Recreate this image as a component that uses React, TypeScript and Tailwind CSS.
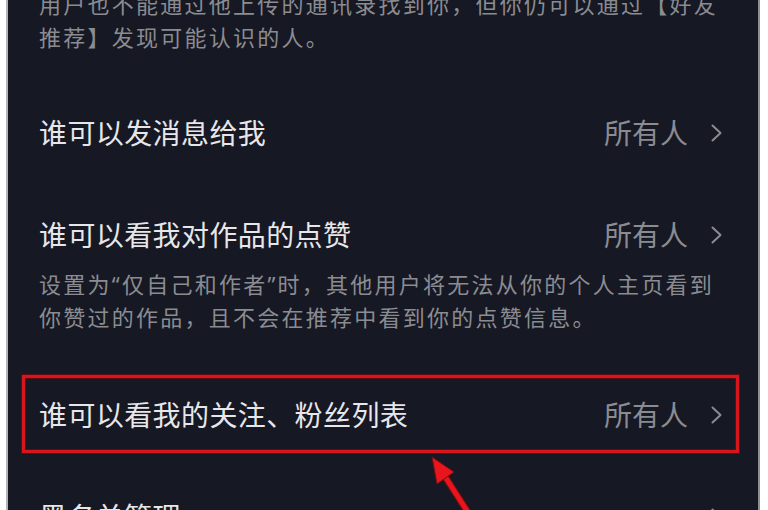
import React from "react";

const font = { fontFamily: '"Noto Sans", "Noto Sans CJK SC", sans-serif' };

function Chevron() {
  return (
    <svg width="14" height="20" viewBox="0 0 14 20" className="ml-[22px] shrink-0">
      <path d="M2.5 2.5 L10.5 10 L2.5 17.5" fill="none" stroke="#8b8c92" strokeWidth="2" strokeLinecap="round" strokeLinejoin="round" />
    </svg>
  );
}

interface RowProps {
  title: string;
  value?: string;
  className?: string;
  highlight?: boolean;
}

function Row({ title, value, className = "", highlight }: RowProps) {
  return (
    <div className={`relative flex h-[40px] shrink-0 items-center justify-between ${className}`}>
      <span className="whitespace-nowrap text-[28px] leading-none tracking-[0.4px] text-[#e7e7ea]">{title}</span>
      <div className="flex items-center">
        {value && <span className="text-[28px] leading-none text-[#8b8c92]">{value}</span>}
        <Chevron />
      </div>
      {/* annotation box */}
      {highlight && (
        <div className="pointer-events-none absolute -bottom-[18px] -left-[17px] -right-[15px] -top-[20px] border-[3px] border-[#d8151d] shadow-[0_0_0_1px_#5a0d12,inset_0_0_0_1px_#5a0d12]" />
      )}
    </div>
  );
}

export default function App() {
  return (
    <div className="relative h-[510px] w-[768px] overflow-hidden bg-white pl-[6px] pr-[8px]" style={font}>
      <div className="flex h-full flex-col overflow-hidden border-l-2 border-r-2 border-l-[#b4b4b4] border-r-[#8e8e8e] bg-[#161823] pl-[31px] pr-[34px]">
        <div className="-mt-[12px] shrink-0 whitespace-nowrap text-[22px] leading-[33px] tracking-[2.25px] text-[#8b8c92]">
          <p>用户也不能通过他上传的通讯录找到你，但你仍可以通过【好友</p>
          <p>推荐】发现可能认识的人。</p>
        </div>

        <Row title="谁可以发消息给我" value="所有人" className="mt-[59px]" />

        <Row title="谁可以看我对作品的点赞" value="所有人" className="mt-[62px]" />
        <div className="mt-[13px] shrink-0 whitespace-nowrap text-[22px] leading-[33px] tracking-[2.25px] text-[#8b8c92]">
          <p>设置为“仅自己和作者”时，其他用户将无法从你的个人主页看到</p>
          <p>你赞过的作品，且不会在推荐中看到你的点赞信息。</p>
        </div>

        <Row title="谁可以看我的关注、粉丝列表" value="所有人" className="mt-[61px]" highlight />

        <Row title="黑名单管理" className="mt-[62px]" />
      </div>

      {/* red arrow annotation */}
      <svg className="pointer-events-none absolute left-0 top-0" width="768" height="510" viewBox="0 0 768 510">
        <line x1="444" y1="475" x2="478" y2="528" stroke="#7a0d12" strokeWidth="7" />
        <line x1="444" y1="475" x2="478" y2="528" stroke="#e8151c" strokeWidth="5" />
        <polygon points="432,457 454,472 437,484" fill="#e8151c" stroke="#7a0d12" strokeWidth="1" strokeLinejoin="round" />
      </svg>
    </div>
  );
}
